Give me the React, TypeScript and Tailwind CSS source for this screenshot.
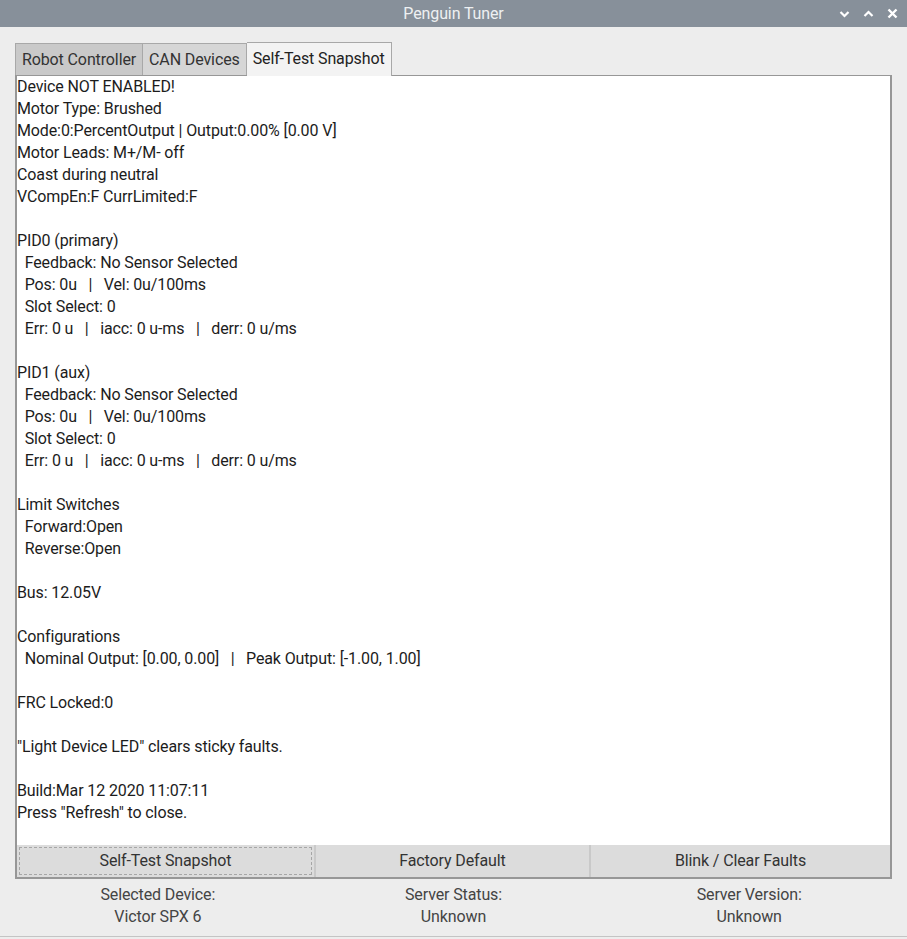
import React from "react";

const lines: string[] = [
  "Device NOT ENABLED!",
  "Motor Type: Brushed",
  "Mode:0:PercentOutput | Output:0.00% [0.00 V]",
  "Motor Leads: M+/M- off",
  "Coast during neutral",
  "VCompEn:F CurrLimited:F",
  "",
  "PID0 (primary)",
  "  Feedback: No Sensor Selected",
  "  Pos: 0u   |   Vel: 0u/100ms",
  "  Slot Select: 0",
  "  Err: 0 u   |   iacc: 0 u-ms   |   derr: 0 u/ms",
  "",
  "PID1 (aux)",
  "  Feedback: No Sensor Selected",
  "  Pos: 0u   |   Vel: 0u/100ms",
  "  Slot Select: 0",
  "  Err: 0 u   |   iacc: 0 u-ms   |   derr: 0 u/ms",
  "",
  "Limit Switches",
  "  Forward:Open",
  "  Reverse:Open",
  "",
  "Bus: 12.05V",
  "",
  "Configurations",
  "  Nominal Output: [0.00, 0.00]   |   Peak Output: [-1.00, 1.00]",
  "",
  "FRC Locked:0",
  "",
  "\"Light Device LED\" clears sticky faults.",
  "",
  "Build:Mar 12 2020 11:07:11",
  "Press \"Refresh\" to close.",
];

function TitleBar() {
  return (
    <div className="relative flex h-[27px] items-center justify-center bg-[#87909a]">
      <span className="text-[16px] text-[#eef0f2]">Penguin Tuner</span>
      <div className="absolute right-[9px] top-0 flex h-full items-center gap-[13px]">
        <svg width="11" height="8" viewBox="0 0 11 8">
          <path d="M1.5 2 L5.5 6 L9.5 2" stroke="white" strokeWidth="2.2" fill="none" />
        </svg>
        <svg width="11" height="8" viewBox="0 0 11 8">
          <path d="M1.5 6 L5.5 2 L9.5 6" stroke="white" strokeWidth="2.2" fill="none" />
        </svg>
        <svg width="11" height="11" viewBox="0 0 11 11">
          <path d="M1.5 1.5 L9.5 9.5 M9.5 1.5 L1.5 9.5" stroke="white" strokeWidth="2.4" fill="none" />
        </svg>
      </div>
    </div>
  );
}

export default function App() {
  return (
    <div
      className="flex h-[939px] w-[907px] flex-col bg-[#ededed] tracking-[-0.12px] text-[#1c1c1c]"
      style={{ fontFamily: "Roboto, 'Liberation Sans', sans-serif" }}
    >
      <TitleBar />

      <div className="px-[15px] pt-[15px]">
        {/* tabs */}
        <div className="flex h-[33px] items-end text-[16px]">
          <div className="flex h-[32px] items-center border border-b-0 border-[#a8a8a8] bg-[#c9c9c9] px-[6px] text-[#333]">
            Robot Controller
          </div>
          <div className="flex h-[32px] items-center border border-b-0 border-l-0 border-[#a8a8a8] bg-[#d6d6d6] px-[6px] text-[#333]">
            CAN Devices
          </div>
          <div className="relative z-10 -mb-px flex h-[34px] items-center border border-b-0 border-l-0 border-[#a8a8a8] bg-[#f3f3f3] px-[6px] pb-[1px] text-[#222]">
            Self-Test Snapshot
          </div>
        </div>

        {/* panel */}
        <div className="flex h-[804px] flex-col border-2 border-t border-[#979797] bg-white">
          <div className="flex-1 text-[16px] leading-[22px]">
            {lines.map((l, i) => (
              <div key={i} className="h-[22px] whitespace-pre">
                {l}
              </div>
            ))}
          </div>
          <div className="flex h-[32px] bg-[#c9c9c9] text-[16px] text-[#333]">
            <button className="flex w-[299px] items-center justify-center border-r-2 border-[#c9c9c9] bg-[#dcdcdc] p-[2px]">
              <span className="flex h-full w-full items-center justify-center border border-dashed border-[#a6a6a6]">
                Self-Test Snapshot
              </span>
            </button>
            <button className="flex w-[275px] items-center justify-center border-r-2 border-[#c9c9c9] bg-[#dcdcdc]">
              Factory Default
            </button>
            <button className="flex flex-1 items-center justify-center bg-[#dcdcdc]">
              Blink / Clear Faults
            </button>
          </div>
        </div>

        {/* footer */}
        <div className="-mx-[5px] grid grid-cols-3 pt-[5px] text-center text-[16px] leading-[22px] text-[#444]">
          <div>
            <div>Selected Device:</div>
            <div>Victor SPX 6</div>
          </div>
          <div>
            <div>Server Status:</div>
            <div>Unknown</div>
          </div>
          <div>
            <div>Server Version:</div>
            <div>Unknown</div>
          </div>
        </div>
      </div>
      <div className="mt-auto h-[3px] border-t border-[#c4c4c4] bg-[#ededed]" />
    </div>
  );
}
